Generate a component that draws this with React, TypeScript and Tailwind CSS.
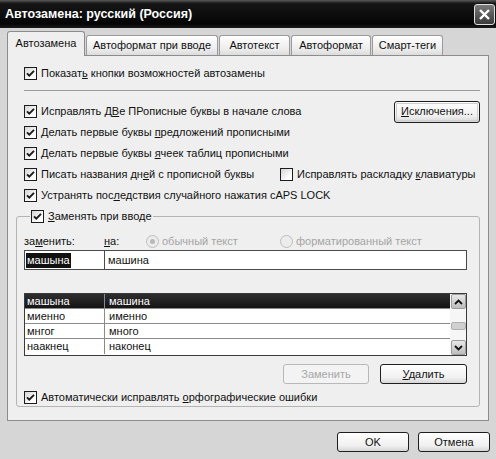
import * as React from "react";

type Tab = { label: string; className: string; active?: boolean };

const tabs: Tab[] = [
  { label: "Автозамена", className: "w-[78px]", active: true },
  { label: "Автоформат при вводе", className: "w-[132px]" },
  { label: "Автотекст", className: "w-[71px]" },
  { label: "Автоформат", className: "w-[80px]" },
  { label: "Смарт-теги", className: "w-[71px]" },
];

const entries = [
  { from: "машына", to: "машина", selected: true },
  { from: "миенно", to: "именно" },
  { from: "мнгог", to: "много" },
  { from: "наакнец", to: "наконец" },
];

function CheckBox({ checked = true }: { checked?: boolean }) {
  return (
    <span className="flex h-[13px] w-[13px] shrink-0 items-center justify-center border border-[#1c1c1c] bg-[linear-gradient(135deg,#d4d4d4,#ffffff_75%)]">
      {checked && (
        <svg width="9" height="9" viewBox="0 0 9 9">
          <path d="M1 4.3 L3.3 6.6 L8 1.9" fill="none" stroke="#1a1a1a" strokeWidth="1.9" />
        </svg>
      )}
    </span>
  );
}

function CheckRow({ children, checked = true }: { children: React.ReactNode; checked?: boolean }) {
  return (
    <span className="flex items-center gap-[4px] whitespace-nowrap">
      <CheckBox checked={checked} />
      <span>{children}</span>
    </span>
  );
}

function Radio({ selected = false }: { selected?: boolean }) {
  return (
    <span className="flex h-[13px] w-[13px] shrink-0 items-center justify-center rounded-full border border-[#bdbdbd] bg-[#ececec]">
      {selected && <span className="h-[5px] w-[5px] rounded-full bg-[#b8b8b8]" />}
    </span>
  );
}

function Button({
  children,
  className = "",
  disabled = false,
}: {
  children: React.ReactNode;
  className?: string;
  disabled?: boolean;
}) {
  const look = disabled
    ? "border-[#b8b8b8] bg-[#f3f3f3] text-[#a6a6a6]"
    : "border-[#1e1e1e] bg-[linear-gradient(to_bottom,#ffffff,#f0f0f0_70%,#d6d6d6)] text-[#111]";
  return (
    <div className={`flex items-center justify-center rounded-[3px] border ${look} ${className}`}>
      {children}
    </div>
  );
}

function ScrollArrow({ up }: { up?: boolean }) {
  return (
    <div className="flex h-[15px] w-[15px] items-center justify-center rounded-[2px] border border-[#9c9c9c] bg-[linear-gradient(to_bottom,#e8e8e8,#bdbdbd)]">
      <svg width="9" height="6" viewBox="0 0 9 6">
        <path
          d={up ? "M1 5 L4.5 1.5 L8 5" : "M1 1 L4.5 4.5 L8 1"}
          fill="none"
          stroke="#111"
          strokeWidth="1.8"
        />
      </svg>
    </div>
  );
}

export default function App() {
  return (
    <div className="h-[459px] w-[496px] overflow-hidden bg-[#d6d6d6] font-['Liberation_Sans',Arial,sans-serif] text-[11px] leading-none text-[#111]">
      {/* Title bar */}
      <div className="flex h-[28px] items-center justify-between bg-[linear-gradient(to_bottom,#5a5a5a,#161616_12%,#050505_85%,#1a1a1a)] pl-[5px] pr-[1px]">
        <span className="text-[12.5px] font-bold text-white">Автозамена: русский (Россия)</span>
        <div className="flex h-[21px] w-[21px] items-center justify-center rounded-[3px] border border-[#e0e0e0] bg-[linear-gradient(to_bottom,#7a7a7a,#3a3a3a)]">
          <svg width="13" height="13" viewBox="0 0 13 13">
            <path d="M2 2 L11 11 M11 2 L2 11" stroke="#fff" strokeWidth="2.4" />
          </svg>
        </div>
      </div>

      {/* Tabs */}
      <div className="flex h-[27px] items-end gap-[1px] pl-[7px]">
        {tabs.map((tab) =>
          tab.active ? (
            <div
              key={tab.label}
              className={`relative z-10 -mb-px flex h-[25px] items-center justify-center rounded-t-[3px] border-x border-t border-[#8c8c8c] bg-[#efefef] pb-[2px] ${tab.className}`}
            >
              {tab.label}
            </div>
          ) : (
            <div
              key={tab.label}
              className={`flex h-[20px] items-center justify-center rounded-t-[3px] border-x border-t border-[#9a9a9a] bg-[linear-gradient(to_bottom,#ffffff,#ececec_70%,#dcdcdc)] ${tab.className}`}
            >
              {tab.label}
            </div>
          )
        )}
      </div>

      {/* Tab page */}
      <div className="ml-[7px] flex h-[366px] w-[482px] flex-col border border-[#8c8c8c] bg-[#efefef] px-[8px] pt-[7px]">
        <div className="flex h-[21px] items-center pl-[8px]">
          <CheckRow>
            Показат<u>ь</u> кнопки возможностей автозамены
          </CheckRow>
        </div>
        <div className="mt-[6px] ml-[8px] h-px bg-[#9a9a9a]" />

        <div className="mt-[10px] flex flex-col pl-[8px]">
          <div className="flex h-[21px] items-center justify-between">
            <CheckRow>
              Исправлять Д<u>В</u>е ПРописные буквы в начале слова
            </CheckRow>
            <Button className="h-[22px] w-[86px] outline outline-1 -outline-offset-[3px] outline-[#cfcfcf]">
              <span>
                <u>И</u>сключения...
              </span>
            </Button>
          </div>
          <div className="flex h-[21px] items-center">
            <CheckRow>
              Делать первые буквы <u>п</u>редложений прописными
            </CheckRow>
          </div>
          <div className="flex h-[21px] items-center">
            <CheckRow>
              Делать первые буквы <u>я</u>чеек таблиц прописными
            </CheckRow>
          </div>
          <div className="flex h-[21px] items-center">
            <div className="w-[256px]">
              <CheckRow>
                Писать названия дн<u>е</u>й с прописной буквы
              </CheckRow>
            </div>
            <CheckRow checked={false}>
              Исправлять раскладку <u>к</u>лавиатуры
            </CheckRow>
          </div>
          <div className="flex h-[21px] items-center">
            <CheckRow>
              Устранять пос<u>л</u>едствия случайного нажатия cAPS LOCK
            </CheckRow>
          </div>
        </div>

        {/* Replace-as-you-type group */}
        <fieldset className="mt-[3px] rounded-[3px] border border-[#b4b4b4] pb-[1px] pl-[7px] pr-[12px]">
          <legend className="ml-[6px] px-[1px]">
            <span className="flex h-[14px] items-center">
              <CheckRow>
                <u>З</u>аменять при вводе
              </CheckRow>
            </span>
          </legend>

          <div className="mt-[9px] flex h-[18px] items-center whitespace-nowrap">
            <span className="w-[80px]">
              за<u>м</u>енить:
            </span>
            <span className="w-[42px]">
              <u>н</u>а:
            </span>
            <span className="flex w-[134px] items-center gap-[3px] text-[#a4a4a4]">
              <Radio selected />
              обычный текст
            </span>
            <span className="flex items-center gap-[3px] text-[#a4a4a4]">
              <Radio />
              форматированный текст
            </span>
          </div>

          <div className="flex h-[20px]">
            <div className="flex w-[81px] items-center border border-[#4a4a4a] bg-white pl-px">
              <span className="bg-[#111] px-px py-[2px] text-white">машына</span>
            </div>
            <div className="flex flex-1 items-center border border-l-0 border-[#4a4a4a] bg-white pl-[3px]">
              машина
            </div>
          </div>

          {/* Replacement list */}
          <div className="mt-[23px] flex h-[63px] border border-[#3a3a3a] bg-white">
            <div className="flex flex-1 flex-col">
              {entries.map((e) => (
                <div
                  key={e.from}
                  className={`flex h-[15px] border-b border-[#8a8a8a] last:border-b-0 ${
                    e.selected ? "bg-[linear-gradient(to_bottom,#2e2e2e,#151515)] text-white" : ""
                  }`}
                >
                  <span className="flex w-[80px] items-center border-r border-[#8a8a8a] pl-[2px]">{e.from}</span>
                  <span className="flex items-center pl-[4px]">{e.to}</span>
                </div>
              ))}
            </div>
            <div className="flex w-[16px] flex-col bg-[#f6f6f6] pl-px">
              <ScrollArrow up />
              <div className="flex-1">
                <div className="mt-[13px] h-[8px] w-[15px] rounded-[2px] border border-[#b0b0b0] bg-[#d0d0d0]" />
              </div>
              <ScrollArrow />
            </div>
          </div>

          <div className="mt-[8px] flex h-[20px] justify-end gap-[11px]">
            <Button disabled className="w-[86px]">
              Заменить
            </Button>
            <Button className="w-[87px]">
              <span>
                <u>У</u>далить
              </span>
            </Button>
          </div>

          <div className="mt-[5px] flex h-[16px] items-center">
            <CheckRow>
              Автоматически исправлять <u>о</u>рфографические ошибки
            </CheckRow>
          </div>
        </fieldset>
      </div>

      {/* Dialog buttons */}
      <div className="mt-[11px] flex justify-end gap-[9px] pr-[6px]">
        <Button className="h-[20px] w-[72px]">OK</Button>
        <Button className="h-[20px] w-[72px]">Отмена</Button>
      </div>
    </div>
  );
}
